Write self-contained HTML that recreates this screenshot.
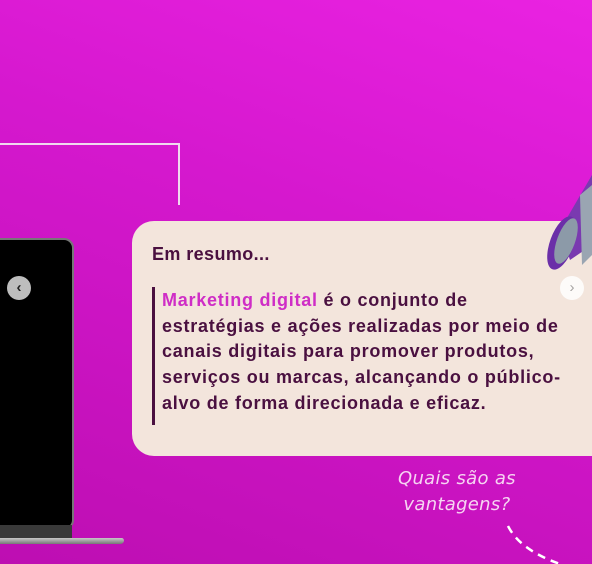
<!DOCTYPE html>
<html><head><meta charset="utf-8"><style>
html,body{margin:0;padding:0;width:592px;height:564px;overflow:hidden}
body{position:relative;background:linear-gradient(200deg,#ea22e2 0%,#d518ce 40%,#bd0eb2 100%);font-family:"Liberation Sans",sans-serif}
.line{position:absolute;background:#f0d8ee}
.card{position:absolute;left:132px;top:221px;width:490px;height:235px;background:#f3e5dc;border-radius:22px}
.h{position:absolute;left:152px;top:244px;font-weight:bold;font-size:18px;color:#4a1040;letter-spacing:0.4px}
.bar{position:absolute;left:152px;top:287px;width:3px;height:138px;background:#4a1040}
.t{position:absolute;left:162px;top:288px;font-weight:bold;font-size:18px;line-height:25.7px;color:#4a1040;white-space:nowrap;letter-spacing:0.75px}
.t b{color:#cf2dc6}
.q{position:absolute;left:398px;top:466px;font-family:"DejaVu Sans",sans-serif;font-style:italic;font-size:18px;line-height:26px;color:#f6d4f2;text-align:center;font-weight:200;letter-spacing:0.3px}
</style></head><body>
<div class="line" style="left:0;top:143px;width:180px;height:2px"></div>
<div class="line" style="left:178px;top:143px;width:2px;height:62px"></div>
<div style="position:absolute;left:-30px;top:238px;width:104px;height:292px;background:#000;border:2px solid #777;border-radius:10px;box-sizing:border-box"></div>
<div style="position:absolute;left:0;top:525px;width:72px;height:14px;background:#3a3a3a"></div>
<div style="position:absolute;left:0;top:538px;width:124px;height:6px;background:linear-gradient(#c8c8c8,#777);border-radius:0 4px 6px 0"></div>
<div style="position:absolute;left:7px;top:276px;width:24px;height:24px;border-radius:50%;background:#bdbdbd;color:#222;font-size:15px;font-weight:bold;text-align:center;line-height:24px">‹</div>
<div class="card"></div>
<div class="h">Em resumo...</div>
<div class="bar"></div>
<div class="t"><b>Marketing digital</b> é o conjunto de<br>estratégias e ações realizadas por meio de<br>canais digitais para promover produtos,<br>serviços ou marcas, alcançando o público-<br>alvo de forma direcionada e eficaz.</div>
<div style="position:absolute;left:560px;top:276px;width:24px;height:24px;border-radius:50%;background:#fff;opacity:.85;color:#999;font-size:15px;text-align:center;line-height:23px">›</div>
<svg style="position:absolute;left:540px;top:175px" width="52" height="100">
<path d="M52 0 L52 70 L30 85 L20 55 Z" fill="#7a3ab0"/>
<ellipse cx="22" cy="68" rx="12" ry="28" transform="rotate(20 22 68)" fill="#6b2fa8"/>
<ellipse cx="26" cy="66" rx="9" ry="24" transform="rotate(20 26 66)" fill="#8c9aa8"/>
<path d="M40 20 L52 10 L52 80 L42 90 Z" fill="#9aa5b2"/>
</svg>
<div class="q">Quais são as<br>vantagens?</div>
<svg style="position:absolute;left:500px;top:520px" width="92" height="44"><path d="M8 6 Q20 30 60 44" stroke="#fff" stroke-width="2.5" fill="none" stroke-dasharray="8 6"/></svg>
</body></html>
